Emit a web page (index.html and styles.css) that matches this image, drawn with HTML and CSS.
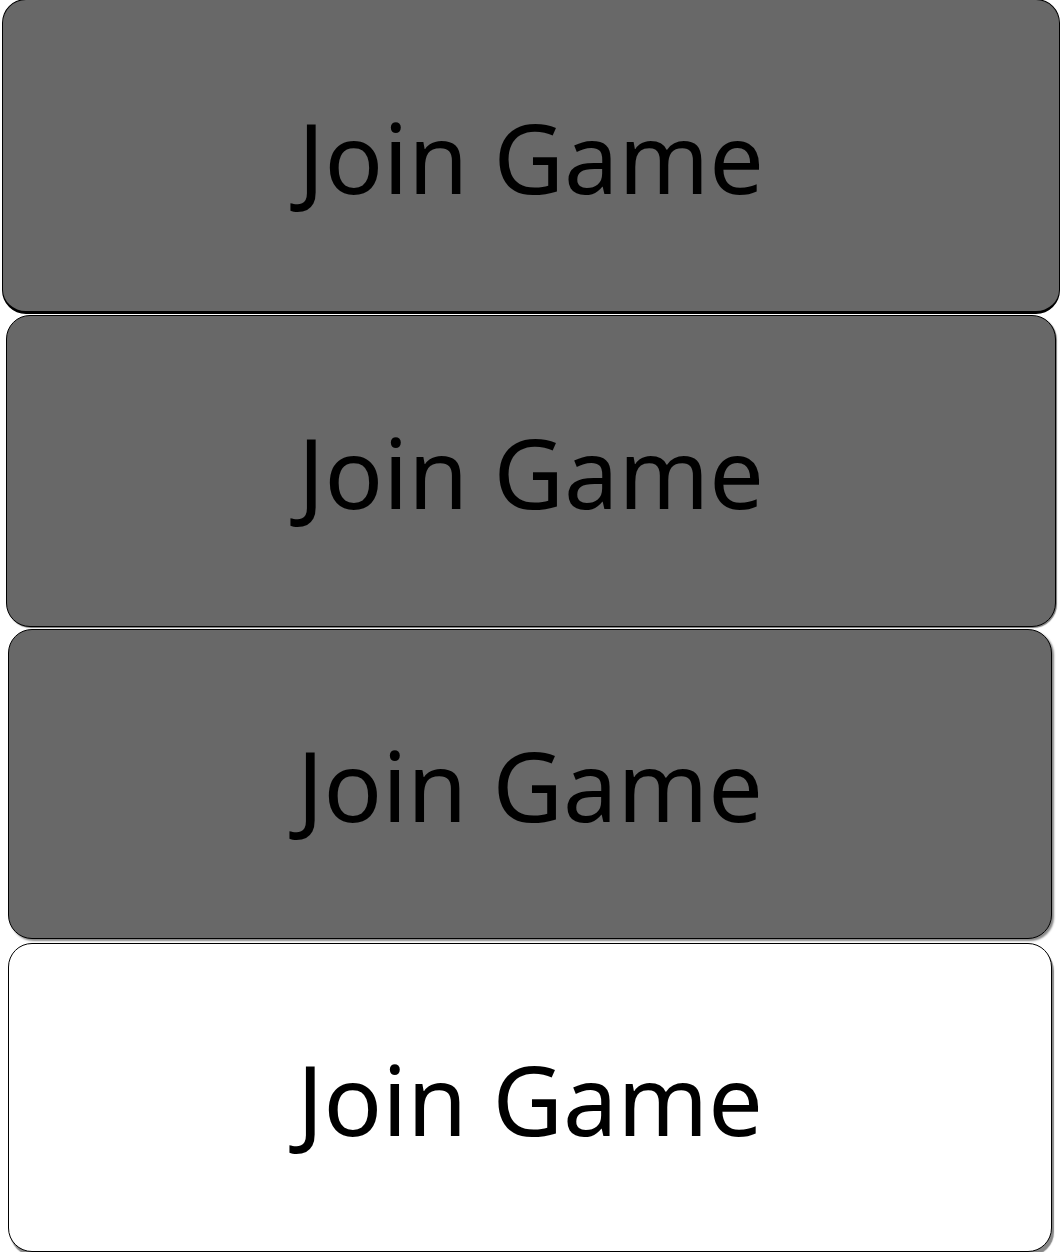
FILE: index.html
```html
<!DOCTYPE html>
<html>
<head>
<meta charset="utf-8">
<link rel="stylesheet" href="styles.css">
</head>
<body>
<div class="stack">
  <button class="btn btn-a">Join Game</button>
  <button class="btn btn-b">Join Game</button>
  <button class="btn btn-c">Join Game</button>
  <button class="btn btn-d">Join Game</button>
</div>
</body>
</html>
```
FILE: styles.css
```css
html, body {
  margin: 0;
  padding: 0;
  background: #ffffff;
}
.stack {
  display: flex;
  flex-direction: column;
}
.btn {
  display: flex;
  align-items: center;
  justify-content: center;
  box-sizing: border-box;
  border: 1.5px solid #000;
  border-radius: 24px;
  background: #686868;
  color: #000;
  font-family: "Noto Sans", "Open Sans", sans-serif;
  font-size: 97px;
  font-weight: 400;
  padding: 0;
  cursor: pointer;
}
.btn-a {
  margin: -1px 2px 1px 2px;
  height: 315px;
  border-bottom-width: 3px;
}
.btn-b {
  margin: 0 6px 2px 6px;
  height: 312px;
  box-shadow: 1px 1px 1px #777;
}
.btn-c {
  margin: 0 10px 4px 8px;
  height: 310px;
  box-shadow: 2px 2px 2px #888;
}
.btn-d {
  margin: 0 10px 0 8px;
  height: 309px;
  background: #ffffff;
  box-shadow: 2px 4px 1px #888;
}
```
